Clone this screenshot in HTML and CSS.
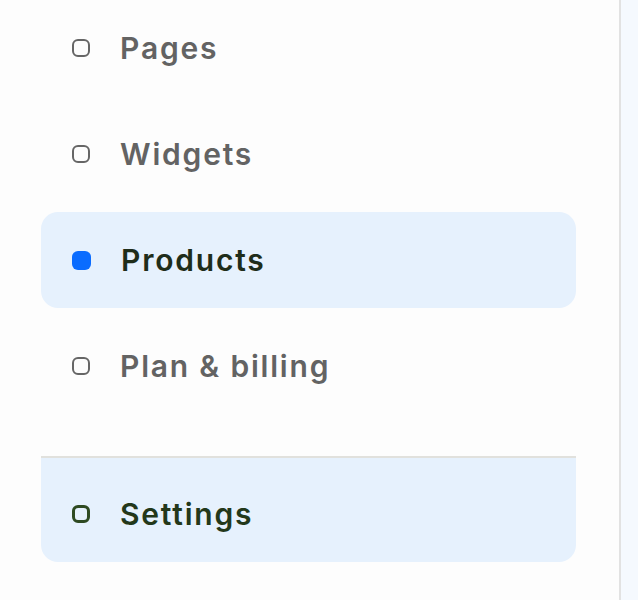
FILE: index.html
```html
<!DOCTYPE html>
<html>
<head>
<meta charset="utf-8">
<link rel="stylesheet" href="styles.css">
</head>
<body>
<div class="layout">
  <nav class="sidebar">
    <ul class="menu">
      <li class="item"><span class="ring"></span><span class="label">Pages</span></li>
      <li class="item"><span class="ring"></span><span class="label">Widgets</span></li>
      <li class="item active"><span class="dot"></span><span class="label">Products</span></li>
      <li class="item"><span class="ring"></span><span class="label">Plan &amp; billing</span></li>
    </ul>
    <div class="footer">
      <div class="item selected"><span class="ring"></span><span class="label">Settings</span></div>
    </div>
  </nav>
  <main class="content"></main>
</div>
</body>
</html>
```
FILE: styles.css
```css
html, body {
  margin: 0;
  padding: 0;
  height: 100%;
}
body {
  font-family: Inter, "Liberation Sans", sans-serif;
  background: #f5f9fe;
}
.layout {
  display: flex;
  height: 600px;
}
.sidebar {
  flex: none;
  width: 621px;
  box-sizing: border-box;
  padding: 0 43px 0 41px;
  background: #fdfdfd;
  border-right: 2px solid #e2e2e2;
}
.content {
  flex: 1;
  background: #f5f9fe;
}
.menu {
  list-style: none;
  margin: 0;
  padding: 0;
  display: flex;
  flex-direction: column;
  gap: 10px;
}
.item {
  height: 96px;
  display: flex;
  align-items: center;
  padding-left: 31px;
  border-radius: 17px;
  color: #636363;
  font-size: 30px;
  font-weight: 600;
  letter-spacing: 1.8px;
  box-sizing: border-box;
}
.label {
  margin-left: 30px;
}
.ring {
  width: 18px;
  height: 18px;
  box-sizing: border-box;
  border: 2.5px solid #666;
  border-radius: 6px;
  flex: none;
}
.dot {
  width: 19px;
  height: 19px;
  background: #0a6cff;
  border-radius: 6px;
  flex: none;
}
.active {
  background: #e6f1fd;
  color: #1f2d1a;
}
.footer {
  margin-top: 42px;
  border-top: 2px solid #e1e1dd;
}
.selected {
  background: #e6f1fd;
  color: #23381a;
  height: 104px;
  padding-top: 8px;
  border-radius: 0 0 17px 17px;
}
.selected .ring {
  border-color: #2e4a22;
  border-width: 3px;
}
```
